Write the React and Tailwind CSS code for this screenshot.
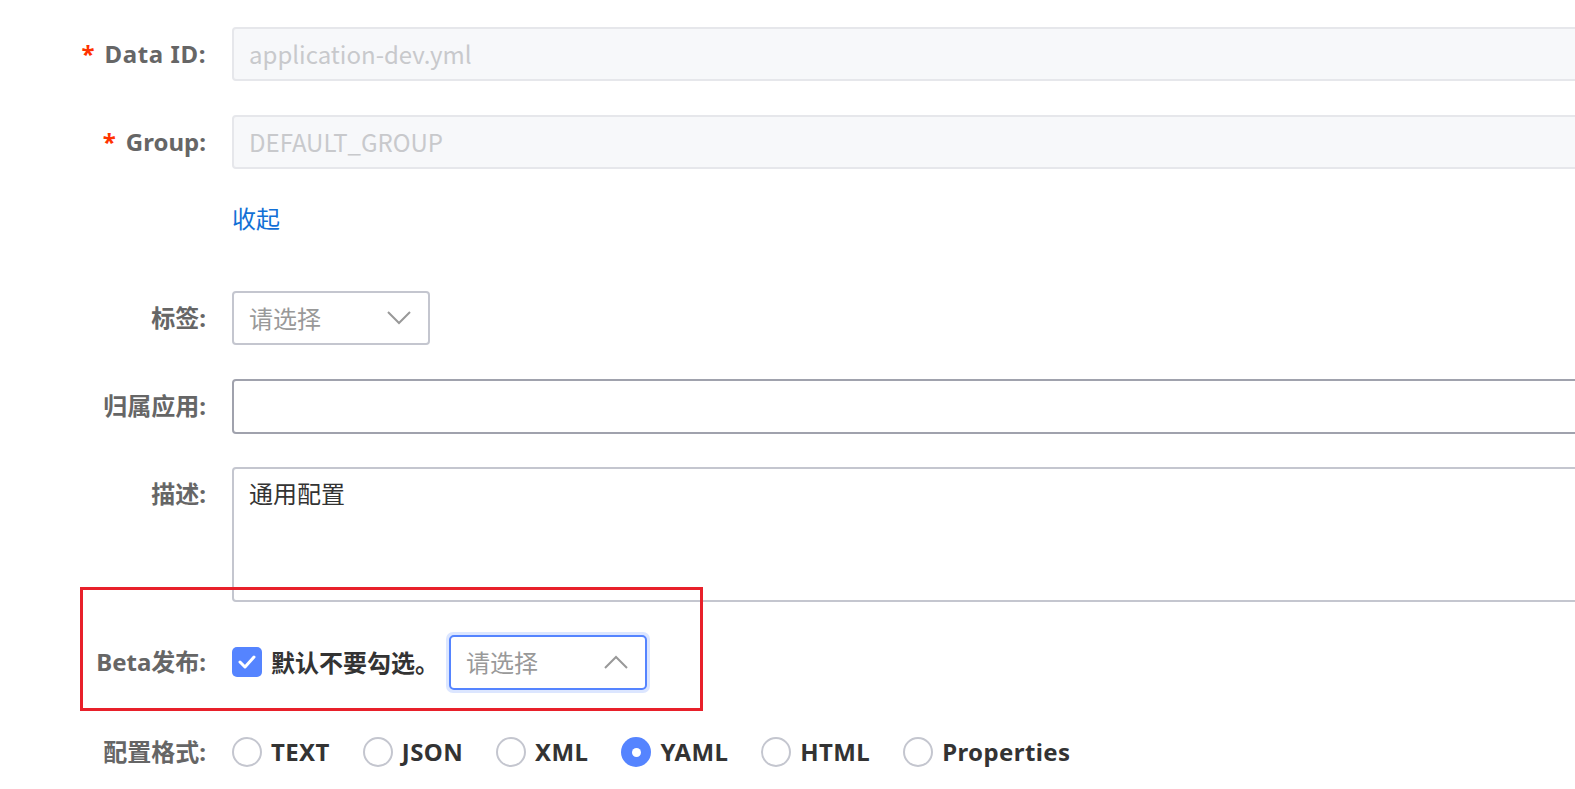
import React from "react";

const labelFont = { fontFamily: '"Noto Sans", "Noto Sans CJK SC", sans-serif' };
const inputFont = { fontFamily: '"Noto Sans CJK SC", "Noto Sans", sans-serif' };

function Label({ children, required }) {
  return (
    <div
      className="w-[206px] h-[54px] shrink-0 flex items-center justify-end text-[24px] font-bold text-[#666666] whitespace-nowrap"
      style={labelFont}
    >
      {required && <span className="text-[#ff3300] mr-[10px]">*</span>}
      {children}
    </div>
  );
}

function Chevron({ up }) {
  return (
    <svg width="24" height="14" viewBox="0 0 24 14" fill="none">
      {up ? (
        <polyline points="1,13 12,2 23,13" stroke="#999999" strokeWidth="2" />
      ) : (
        <polyline points="1,1 12,12 23,1" stroke="#999999" strokeWidth="2" />
      )}
    </svg>
  );
}

function Radio({ label, checked }) {
  return (
    <div className="flex items-center mr-[33px]">
      {checked ? (
        <span className="w-[30px] h-[30px] rounded-full bg-[#5584ff] flex items-center justify-center">
          <span className="w-[9px] h-[9px] rounded-full bg-white" />
        </span>
      ) : (
        <span className="w-[30px] h-[30px] rounded-full border-2 border-[#c4c6cf] bg-white" />
      )}
      <span
        className="ml-[9px] text-[24px] font-bold text-[#333333] tracking-[0.4px]"
        style={labelFont}
      >
        {label}
      </span>
    </div>
  );
}

export default function App() {
  return (
    <div className="relative w-[1575px] h-[789px] overflow-hidden bg-white">
      <div className="flex flex-col">
        {/* Data ID */}
        <div className="flex mt-[27px]">
          <Label required>
            <span className="tracking-[0.6px]">Data ID:</span>
          </Label>
          <div
            className="ml-[26px] w-[1500px] shrink-0 h-[54px] rounded-[4px] border-2 border-[#e6e7eb] bg-[#f7f8fa] flex items-center pl-[15px] text-[24px] text-[#c8c9cc]"
            style={inputFont}
          >
            application-dev.yml
          </div>
        </div>

        {/* Group */}
        <div className="flex mt-[34px]">
          <Label required>Group:</Label>
          <div
            className="ml-[26px] w-[1500px] shrink-0 h-[54px] rounded-[4px] border-2 border-[#e6e7eb] bg-[#f7f8fa] flex items-center pl-[15px] text-[24px] text-[#c8c9cc]"
            style={inputFont}
          >
            DEFAULT_GROUP
          </div>
        </div>

        {/* collapse link */}
        <div className="flex mt-[34px]">
          <div className="w-[206px] shrink-0" />
          <div
            className="ml-[26px] h-[30px] leading-[30px] text-[24px] text-[#1270d6]"
            style={inputFont}
          >
            收起
          </div>
        </div>

        {/* Tags */}
        <div className="flex mt-[58px]">
          <Label>标签:</Label>
          <div
            className="ml-[26px] w-[198px] h-[54px] rounded-[4px] border-2 border-[#c4c6cf] bg-white flex items-center justify-between pl-[15px] pr-[17px] text-[24px] text-[#999999]"
            style={inputFont}
          >
            <span>请选择</span>
            <Chevron />
          </div>
        </div>

        {/* App */}
        <div className="flex mt-[34px]">
          <Label>归属应用:</Label>
          <div className="ml-[26px] w-[1500px] shrink-0 h-[55px] rounded-[4px] border-2 border-[#a0a2ad] bg-white" />
        </div>

        {/* Desc */}
        <div className="flex mt-[33px]">
          <Label>描述:</Label>
          <div
            className="ml-[26px] w-[1500px] shrink-0 h-[135px] rounded-[4px] border-2 border-[#c4c6cf] bg-white pl-[15px] pt-[9px] leading-[30px] text-[24px] text-[#333333]"
            style={inputFont}
          >
            通用配置
          </div>
        </div>

        {/* Beta */}
        <div className="flex mt-[33px]">
          <Label>Beta发布:</Label>
          <div className="ml-[26px] flex items-center h-[54px]">
            <span className="w-[30px] h-[30px] rounded-[5px] bg-[#5584ff] flex items-center justify-center">
              <svg width="18" height="14" viewBox="0 0 18 14" fill="none">
                <polyline
                  points="2,7 7,12 16,2"
                  stroke="white"
                  strokeWidth="3"
                  strokeLinecap="round"
                  strokeLinejoin="round"
                />
              </svg>
            </span>
            <span className="ml-[9px] text-[24px] font-bold text-[#333333]" style={inputFont}>
              默认不要勾选。
            </span>
            <div className="ml-[7px] rounded-[7px] p-[3px] bg-[#dce6ff]">
              <div
                className="w-[198px] h-[55px] rounded-[5px] border-2 border-[#5584ff] bg-white flex items-center justify-between pl-[15px] pr-[17px] text-[24px] text-[#999999]"
                style={inputFont}
              >
                <span>请选择</span>
                <Chevron up />
              </div>
            </div>
          </div>
        </div>

        {/* Format */}
        <div className="flex mt-[36px]">
          <Label>配置格式:</Label>
          <div className="ml-[26px] flex items-center h-[54px]">
            <Radio label="TEXT" />
            <Radio label="JSON" />
            <Radio label="XML" />
            <Radio label="YAML" checked />
            <Radio label="HTML" />
            <Radio label="Properties" />
          </div>
        </div>
      </div>

      {/* annotation box */}
      <div className="absolute left-[80px] top-[587px] w-[623px] h-[124px] border-[3px] border-[#e8202a] pointer-events-none" />
    </div>
  );
}
